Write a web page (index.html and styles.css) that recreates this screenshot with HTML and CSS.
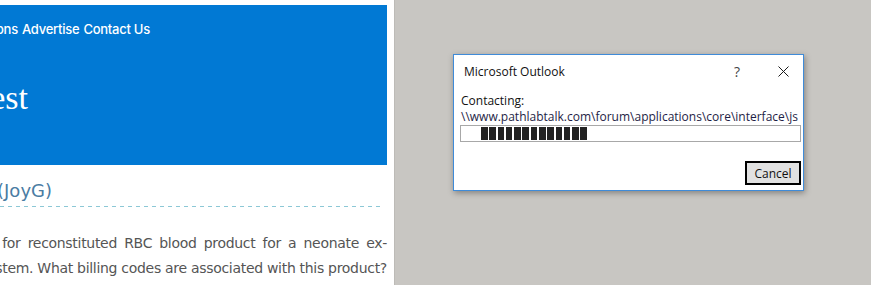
FILE: index.html
```html
<!DOCTYPE html>
<html>
<head>
  <title>PathLabTalk - Microsoft Outlook</title>
  <link rel="stylesheet" href="styles.css">
</head>
<body>
  <div class="site">
    <header class="hero">
      <nav class="hero-nav">
        <a>Home</a>
        <a>Forums</a>
        <a>Publications</a>
        <a>Advertise</a>
        <a>Contact Us</a>
      </nav>
      <h1 class="hero-title">PathLabTalk Digest</h1>
    </header>
    <h2 class="post-title">Billing for Reconstituted Blood (JoyG)</h2>
    <div class="post-rule"></div>
    <p class="post-line post-line-first"><span>We received an order for reconstituted RBC blood product for a neonate ex-</span></p>
    <p class="post-line post-line-second"><span>change transfusion through our system. What billing codes are associated with this product?</span></p>
  </div>

  <div class="desktop">
    <div class="dialog">
      <div class="dialog-bar">
        <span class="dialog-title">Microsoft Outlook</span>
        <span class="dialog-help">?</span>
        <span class="dialog-close">
          <svg width="11" height="11" viewBox="0 0 11 11">
            <path d="M0.5 0.5 L10.5 10.5 M10.5 0.5 L0.5 10.5" stroke="#1a1a1a" stroke-width="1" fill="none"/>
          </svg>
        </span>
      </div>
      <div class="dialog-body">
        <div class="dialog-label">Contacting:</div>
        <div class="dialog-path">\\www.pathlabtalk.com\forum\applications\core\interface\js</div>
        <div class="progress">
          <i></i><i></i><i></i><i></i><i></i><i></i><i></i><i></i><i></i><i></i><i></i><i></i><i></i>
        </div>
      </div>
      <div class="dialog-actions">
        <button class="dialog-button">Cancel</button>
      </div>
    </div>
  </div>
</body>
</html>
```

FILE: styles.css
```css
/* page behind the dialog, scrolled to the right */

body {
  margin: 0;
  display: flex;
  height: 285px;
  overflow: hidden;
  background-color: #c8c6c2;
}

.site {
  width: 394px;
  flex: none;
  background-color: #ffffff;
  overflow: hidden;
}

.hero {
  width: 387px;
  height: 160px;
  margin-top: 5px;
  background-color: #0179d4;
  color: #ffffff;
  overflow: hidden;
}

.hero-nav {
  display: flex;
  justify-content: flex-end;
  gap: 4px;
  padding: 16px 237px 0 0;
  white-space: nowrap;
  font-family: Inter, "Liberation Sans", sans-serif;
  font-size: 13px;
  font-weight: 500;
  letter-spacing: -0.25px;
  line-height: 16px;
}

.hero-title {
  display: flex;
  justify-content: flex-end;
  margin: 41px 0 0 0;
  padding-right: 359px;
  white-space: nowrap;
  font-family: "Liberation Serif", serif;
  font-size: 34px;
  font-weight: normal;
  line-height: 40px;
}

.post-title {
  display: flex;
  justify-content: flex-end;
  width: 387px;
  margin: 14px 0 0 0;
  padding-right: 335px;
  box-sizing: border-box;
  white-space: nowrap;
  font-family: "DejaVu Sans", sans-serif;
  font-size: 18px;
  font-weight: normal;
  line-height: 24px;
  color: #4a7ca3;
}

.post-rule {
  width: 384px;
  height: 1px;
  margin: 3px 0 0 0;
  background: repeating-linear-gradient(90deg, #8cc8d6 0 4px, transparent 4px 8px);
}

.post-line {
  display: flex;
  justify-content: flex-end;
  width: 387px;
  margin: 0;
  white-space: nowrap;
  font-family: "DejaVu Sans", sans-serif;
  font-size: 14px;
  letter-spacing: -0.3px;
  line-height: 25px;
  color: #555555;
}

.post-line-first {
  margin-top: 24px;
  word-spacing: 3px;
}

.desktop {
  flex: 1;
  border-left: 1px solid #bdbbb7;
  padding: 54px 0 0 58px;
}

.dialog {
  width: 349px;
  height: 135px;
  border: 1px solid #3f8bd8;
  background-color: #ffffff;
  box-shadow: 1px 2px 6px rgba(0, 0, 0, 0.35);
  font-family: "Open Sans", "Noto Sans", sans-serif;
  font-size: 12px;
  color: #111111;
  display: flex;
  flex-direction: column;
}

.dialog-bar {
  display: flex;
  align-items: center;
  height: 32px;
  padding: 0 14px 0 10px;
}

.dialog-title {
  flex: 1;
}

.dialog-help {
  width: 44px;
  font-size: 14px;
  color: #444444;
}

.dialog-close {
  display: flex;
}

.dialog-body {
  padding: 6px 2px 0 6px;
}

.dialog-label,
.dialog-path {
  padding-left: 1px;
  line-height: 16px;
}

.dialog-path {
  color: #1e1e46;
  white-space: nowrap;
}

.progress {
  display: flex;
  gap: 1.7px;
  height: 13px;
  padding: 1px 0 1px 20px;
  border: 1px solid #a8a8a8;
}

.progress i {
  width: 6.6px;
  background-color: #222222;
}

.dialog-actions {
  display: flex;
  justify-content: flex-end;
  margin-top: auto;
  padding: 0 2px 5px 0;
}

.dialog-button {
  width: 56px;
  height: 24px;
  border: 2px solid #000000;
  background-color: #e1e1e1;
  font-family: "Open Sans", "Noto Sans", sans-serif;
  font-size: 12px;
  color: #111111;
  padding: 0;
}
```
